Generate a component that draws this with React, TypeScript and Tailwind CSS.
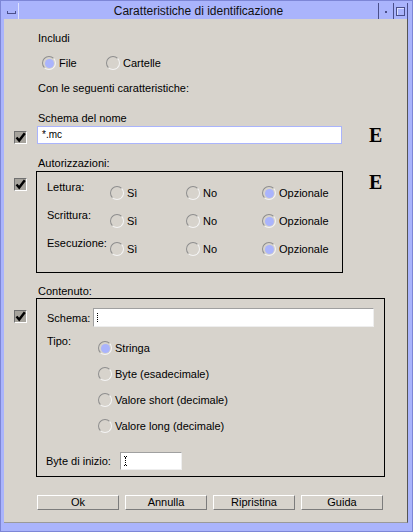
const FONT = { fontFamily: '"Liberation Sans", Arial, sans-serif' }

function Radio({ on, label }: { on?: boolean; label: string }) {
  return (
    <span className="flex h-[14px] items-center gap-[3px] leading-[14px]">
      <span className="flex h-[14px] w-[14px] shrink-0 items-center justify-center rounded-full border border-t-[#8e8e8e] border-l-[#8e8e8e] border-r-[#f4f4f4] border-b-[#f4f4f4]">
        {on && <span className="h-[9px] w-[9px] rounded-full bg-[#aab4fc]" />}
      </span>
      <span>{label}</span>
    </span>
  )
}

function Check() {
  return (
    <div className="flex h-[13px] w-[13px] shrink-0 items-center justify-center border border-t-[#707070] border-l-[#707070] border-r-white border-b-white bg-[#a6a39c]">
      <svg width="11" height="11" viewBox="0 0 11 11">
        <path d="M1.5 5.5 L4.2 8.5 L9.8 1.2" stroke="#000" strokeWidth="2.4" fill="none" />
      </svg>
    </div>
  )
}

function Btn({ label }: { label: string }) {
  return (
    <div className="flex h-[15px] w-[82px] items-center justify-center border border-t-white border-l-white border-r-[#7c7c7c] border-b-[#7c7c7c] text-[11px] leading-none">
      {label}
    </div>
  )
}

function BigE() {
  return (
    <div
      className="h-[18px] text-[20px] leading-[18px] font-bold text-black"
      style={{ fontFamily: '"Liberation Serif", "Times New Roman", serif' }}
    >
      E
    </div>
  )
}

export default function App() {
  return (
    <div className="h-[532px] w-[413px] border border-[#7d86d6] bg-[#aab4fc] pt-[2px] pr-[4px] pl-[3px] text-black" style={FONT}>
      {/* title bar */}
      <div className="flex h-[16px] w-[404px] items-stretch bg-[#aab4fc]">
        <div className="flex w-[15px] items-center justify-center border-r border-r-[#dde1ff]">
          <span className="mt-[3px] h-[3px] w-[9px] border-x border-b border-[#4a4f8a]" />
        </div>
        <div className="flex flex-1 items-center justify-center text-[12px] leading-none text-[#111]">Caratteristiche di identificazione</div>
        <div className="flex w-[15px] items-center justify-center border-l border-l-[#4a4f8a]">
          <span className="mt-[2px] h-[2px] w-[2px] bg-[#4a4f8a]" />
        </div>
        <div className="flex w-[15px] items-center justify-center border-l border-l-[#4a4f8a] border-r border-r-[#4a4f8a]">
          <span className="h-[9px] w-[9px] border border-[#4a4f8a] shadow-[inset_1px_1px_0_#dde1ff]" />
        </div>
      </div>

      {/* content */}
      <div className="flex h-[504px] w-[404px] flex-col border-r border-b border-r-[#555] border-b-[#9a9a9a] bg-[#d7d3cc] pl-[10px] text-[11px] leading-[14px]">
        <div className="mt-[12px] h-[14px] pl-[24px]">Includi</div>
        <div className="mt-[11px] flex h-[14px] pl-[28px]">
          <div className="w-[64px]">
            <Radio on label="File" />
          </div>
          <Radio label="Cartelle" />
        </div>
        <div className="mt-[11px] h-[14px] pl-[24px]">Con le seguenti caratteristiche:</div>

        <div className="mt-[16px] h-[14px] pl-[24px]">Schema del nome</div>
        <div className="mt-[1px] flex h-[18px] items-start">
          <div className="mt-[5px]">
            <Check />
          </div>
          <div className="ml-[10px] flex h-[18px] w-[305px] items-center border border-[#aab4fc] bg-white pl-[4px] text-[10px]">*.mc</div>
          <div className="ml-[27px]">
            <BigE />
          </div>
        </div>

        <div className="mt-[12px] h-[14px] pl-[24px]">Autorizzazioni:</div>
        <div className="mt-[1px] flex items-start">
          <div className="mt-[7px]">
            <Check />
          </div>
          <div className="ml-[9px] flex w-[307px] flex-col gap-[8px] border border-black pt-[8px] pb-[16px] pl-[10px]">
            {['Lettura:', 'Scrittura:', 'Esecuzione:'].map((l) => (
              <div key={l} className="flex h-[20px]">
                <div className="h-[14px] w-[63px]">{l}</div>
                <div className="mt-[6px] flex">
                  <div className="w-[76px]">
                    <Radio label="Sì" />
                  </div>
                  <div className="w-[76px]">
                    <Radio label="No" />
                  </div>
                  <Radio on label="Opzionale" />
                </div>
              </div>
            ))}
          </div>
          <div className="mt-[2px] ml-[26px]">
            <BigE />
          </div>
        </div>

        <div className="mt-[12px] h-[13px] pl-[24px] leading-[13px]">Contenuto:</div>
        <div className="flex items-start">
          <div className="mt-[12px]">
            <Check />
          </div>
          <div className="ml-[9px] flex w-[349px] flex-col border border-black pt-[9px] pb-[6px] pl-[10px]">
            <div className="flex h-[19px] items-center">
              <div className="w-[46px]">Schema:</div>
              <div className="flex h-[19px] w-[281px] items-center border border-t-[#a0a0a0] border-l-[#a0a0a0] border-r-[#eeeeee] border-b-[#eeeeee] bg-white pl-[3px]">
                <span className="h-[9px] w-0 border-l border-dotted border-black" />
              </div>
            </div>
            <div className="mt-[7px] flex">
              <div className="h-[14px] w-[51px]">Tipo:</div>
              <div className="mt-[1px] flex flex-col">
                <div className="flex h-[26px] items-center">
                  <Radio on label="Stringa" />
                </div>
                <div className="flex h-[26px] items-center">
                  <Radio label="Byte (esadecimale)" />
                </div>
                <div className="flex h-[26px] items-center">
                  <Radio label="Valore short (decimale)" />
                </div>
                <div className="flex h-[26px] items-center">
                  <Radio label="Valore long (decimale)" />
                </div>
              </div>
            </div>
            <div className="mt-[13px] flex h-[18px] items-center">
              <div className="-ml-[1px] w-[74px]">Byte di inizio:</div>
              <div className="flex h-[18px] w-[62px] items-center border border-t-[#a0a0a0] border-l-[#a0a0a0] border-r-[#eeeeee] border-b-[#eeeeee] bg-white pl-[3px]">
                <span className="h-[10px] w-[3px] border-y border-dotted border-black">
                  <span className="mx-auto block h-full w-0 border-l border-dotted border-black" />
                </span>
              </div>
            </div>
          </div>
        </div>

        <div className="mt-[18px] flex gap-[6px] pl-[23px]">
          <Btn label="Ok" />
          <Btn label="Annulla" />
          <Btn label="Ripristina" />
          <Btn label="Guida" />
        </div>
      </div>
    </div>
  )
}
